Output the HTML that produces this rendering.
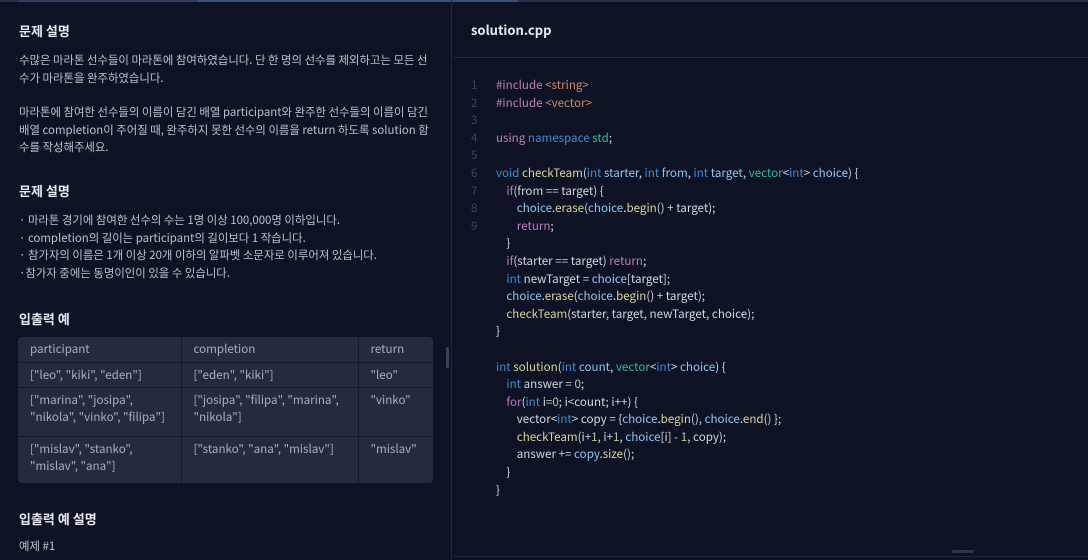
<!DOCTYPE html>
<html><head><meta charset="utf-8"><style>
*{margin:0;padding:0;box-sizing:border-box}
body{width:1088px;height:560px;overflow:hidden;background:#0d1224;font-family:"Noto Sans CJK KR","Liberation Sans",sans-serif;color:#c3c8d4;position:relative}
.top{position:absolute;top:0;left:0;width:1088px;height:2px;background:#263049}
.top i{position:absolute;top:0;height:2px;background:#3a4f7a}
.left{position:absolute;left:0;top:0;width:452px;height:560px;border-right:1px solid #1f2740}
h3{position:absolute;left:19px;font-size:13px;font-weight:700;color:#e8ebf2}
.p{position:absolute;left:19px;font-size:11.4px;line-height:17.6px;color:#bcc1ce;width:415px}
table{position:absolute;left:18px;top:337px;width:415px;border-collapse:collapse;background:#242b40;border-radius:4px;font-size:11.6px;color:#a9afbf}
td{border:1px solid #141a2c;padding:4px 12px 0;vertical-align:top;line-height:17px}
table tr:first-child td{border-top:none}
table td:first-child{border-left:none}table td:last-child{border-right:none}
table tr:last-child td{border-bottom:none}
.thumb{position:absolute;left:446px;top:347px;width:3px;height:21px;background:#3a4358;border-radius:2px}
.hdr{position:absolute;left:453px;top:0;width:635px;height:58px;border-bottom:1px solid #1f2740}
.hdr span{position:absolute;left:18px;top:20px;font-size:13px;font-weight:700;color:#e8ebf2}
.ln{position:absolute;left:471px;top:77px;font-size:11.6px;line-height:17.6px;color:#3c465e;white-space:pre}
.c{position:absolute;left:496px;top:77px;font-size:11.6px;line-height:17.6px;color:#d4d7de;white-space:pre}
.k{color:#c07bbf}.s{color:#c98a6c}.b{color:#3d8fd1}.t{color:#2fb9a0}.f{color:#d7d49b}.v{color:#8cc9ee}.n{color:#b0cf9c}
.bot{position:absolute;left:453px;top:556px;width:635px;height:1px;background:#1f2740}
.bt{position:absolute;left:952px;top:550px;width:22px;height:3px;background:#2d3549;border-radius:2px}
</style></head><body>
<div class="top"><i style="left:18px;width:180px;background:#2f3c5c"></i><i style="left:198px;width:320px"></i></div>
<div class="left">
<h3 style="top:21px">문제 설명</h3>
<div class="p" style="top:52px">수많은 마라톤 선수들이 마라톤에 참여하였습니다. 단 한 명의 선수를 제외하고는 모든 선<br>수가 마라톤을 완주하였습니다.</div>
<div class="p" style="top:104px">마라톤에 참여한 선수들의 이름이 담긴 배열 participant와 완주한 선수들의 이름이 담긴 배열 completion이 주어질 때, 완주하지 못한 선수의 이름을 return 하도록 solution 함수를 작성해주세요.</div>
<h3 style="top:181px">문제 설명</h3>
<div class="p" style="top:212px">· 마라톤 경기에 참여한 선수의 수는 1명 이상 100,000명 이하입니다.<br>· completion의 길이는 participant의 길이보다 1 작습니다.<br>· 참가자의 이름은 1개 이상 20개 이하의 알파벳 소문자로 이루어져 있습니다.<br>·참가자 중에는 동명이인이 있을 수 있습니다.</div>
<h3 style="top:309px">입출력 예</h3>
<table>
<tr style="height:25px"><td style="width:163px">participant</td><td style="width:177px">completion</td><td>return</td></tr>
<tr style="height:25px"><td>["leo", "kiki", "eden"]</td><td>["eden", "kiki"]</td><td>"leo"</td></tr>
<tr style="height:49px"><td>["marina", "josipa", "nikola", "vinko", "filipa"]</td><td>["josipa", "filipa", "marina", "nikola"]</td><td>"vinko"</td></tr>
<tr style="height:47px"><td>["mislav", "stanko", "mislav", "ana"]</td><td>["stanko", "ana", "mislav"]</td><td>"mislav"</td></tr>
</table>
<h3 style="top:509px">입출력 예 설명</h3>
<div class="p" style="top:538px">예제 #1</div>
</div>
<div class="thumb"></div>
<div class="hdr"><span>solution.cpp</span></div>
<div class="ln">1
2
3
4
5
6
7
8
9</div>
<div class="c"><span class="k">#include</span> <span class="s">&lt;string&gt;</span>
<span class="k">#include</span> <span class="s">&lt;vector&gt;</span>

<span class="k">using</span> <span class="b">namespace</span> <span class="t">std</span>;

<span class="b">void</span> <span class="f">checkTeam</span>(<span class="b">int</span> <span class="v">starter</span>, <span class="b">int</span> <span class="v">from</span>, <span class="b">int</span> <span class="v">target</span>, <span class="t">vector</span>&lt;<span class="b">int</span>&gt; <span class="v">choice</span>) {
    <span class="k">if</span>(from == target) {
        <span class="v">choice</span>.<span class="f">erase</span>(<span class="v">choice</span>.<span class="f">begin</span>() + target);
        <span class="k">return</span>;
    }
    <span class="k">if</span>(starter == target) <span class="k">return</span>;
    <span class="b">int</span> newTarget = <span class="v">choice</span>[target];
    <span class="v">choice</span>.<span class="f">erase</span>(<span class="v">choice</span>.<span class="f">begin</span>() + target);
    <span class="f">checkTeam</span>(starter, target, newTarget, choice);
}

<span class="b">int</span> <span class="f">solution</span>(<span class="b">int</span> <span class="v">count</span>, <span class="t">vector</span>&lt;<span class="b">int</span>&gt; <span class="v">choice</span>) {
    <span class="b">int</span> answer = <span class="n">0</span>;
    <span class="k">for</span>(<span class="b">int</span> i=<span class="n">0</span>; i&lt;count; i++) {
        vector&lt;<span class="b">int</span>&gt; copy = {<span class="v">choice</span>.<span class="f">begin</span>(), <span class="v">choice</span>.<span class="f">end</span>() };
        <span class="f">checkTeam</span>(i+<span class="n">1</span>, i+<span class="n">1</span>, <span class="v">choice</span>[i] - <span class="n">1</span>, copy);
        answer += <span class="v">copy</span>.<span class="f">size</span>();
    }
}</div>
<div class="bot"></div><div class="bt"></div>
</body></html>
